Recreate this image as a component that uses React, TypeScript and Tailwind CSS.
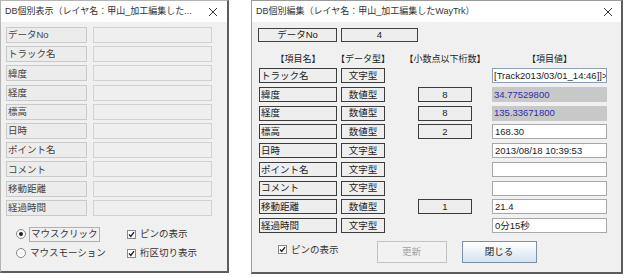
import React from 'react';

const leftRows = ['データNo', 'トラック名', '緯度', '経度', '標高', '日時', 'ポイント名', 'コメント', '移動距離', '経過時間'];

type EditRow = { name: string; type: string; digits?: string; value: string; kind: 'white' | 'gray' | 'focus' };

const editRows: EditRow[] = [
  { name: 'トラック名', type: '文字型', value: '[Track2013/03/01_14:46]]>', kind: 'focus' },
  { name: '緯度', type: '数値型', digits: '8', value: '34.77529800', kind: 'gray' },
  { name: '経度', type: '数値型', digits: '8', value: '135.33671800', kind: 'gray' },
  { name: '標高', type: '数値型', digits: '2', value: '168.30', kind: 'white' },
  { name: '日時', type: '文字型', value: '2013/08/18 10:39:53', kind: 'white' },
  { name: 'ポイント名', type: '文字型', value: '', kind: 'white' },
  { name: 'コメント', type: '文字型', value: '', kind: 'white' },
  { name: '移動距離', type: '数値型', digits: '1', value: '21.4', kind: 'white' },
  { name: '経過時間', type: '文字型', value: '0分15秒', kind: 'white' },
];

const CloseX = () => (
  <svg width="10" height="10" viewBox="0 0 10 10" className="text-[#333]">
    <path d="M1 1L9 9M9 1L1 9" stroke="currentColor" strokeWidth="1" />
  </svg>
);

const Check = () => (
  <span className="w-[9px] h-[9px] border border-[#8a8a8a] bg-white flex items-center justify-center">
    <svg width="7" height="7" viewBox="0 0 7 7">
      <path d="M1 3.5L2.8 5.5L6 1.2" stroke="#222" strokeWidth="1.4" fill="none" />
    </svg>
  </span>
);

const Radio = ({ on }: { on?: boolean }) => (
  <span className="w-[10px] h-[10px] rounded-full border border-[#8a8a8a] bg-gradient-to-b from-[#f4f4f4] to-white flex items-center justify-center">
    {on && <span className="w-[4px] h-[4px] rounded-full bg-[#222]" />}
  </span>
);

export default function App() {
  return (
    <div className="w-[624px] h-[278px] bg-white flex font-['Liberation_Sans','Noto_Sans_CJK_JP',sans-serif] text-[9.5px] leading-none text-[#222]">
      {/* 表示ウィンドウ */}
      <div className="w-[229px] h-[273px] bg-[#f0f0f0] border-l border-t border-[#b4b4b4] border-r-2 border-b-2 border-r-[#5c5c5c] border-b-[#5c5c5c] flex flex-col">
        <div className="h-[21px] bg-white flex items-center justify-between pl-[4px] pr-[9px] text-[9px] text-[#333]">
          <span>DB個別表示（レイヤ名：甲山_加工編集した...</span>
          <CloseX />
        </div>
        <div className="flex flex-col gap-[3.2px] pt-[5px] pl-[5px]">
          {leftRows.map(r => (
            <div key={r} className="flex gap-[6px]">
              <div className="w-[81px] h-[16px] border border-[#c9c9c9] bg-[#ececec] flex items-center pl-[1px] text-[#444]">{r}</div>
              <div className="w-[119px] h-[16px] border border-[#d2d2d2] bg-[#efefef]" />
            </div>
          ))}
        </div>
        <div className="flex flex-col gap-[4px] pt-[11px] pl-[15px] text-[#333]">
          <div className="flex items-center h-[15px]">
            <div className="w-[111px] flex items-center gap-[3px]">
              <Radio on />
              <span className="h-[15px] border border-[#9fb4cc] flex items-center px-[1px]">マウスクリック</span>
            </div>
            <div className="flex items-center gap-[4px]">
              <Check />
              <span>ピンの表示</span>
            </div>
          </div>
          <div className="flex items-center h-[15px]">
            <div className="w-[111px] flex items-center gap-[4px]">
              <Radio />
              <span>マウスモーション</span>
            </div>
            <div className="flex items-center gap-[4px]">
              <Check />
              <span>桁区切り表示</span>
            </div>
          </div>
        </div>
      </div>

      {/* 編集ウィンドウ */}
      <div className="ml-[22px] w-[372px] h-[274px] bg-[#f0f0f0] border-l border-t border-[#9a9a9a] border-r-2 border-b-2 border-r-[#5c5c5c] border-b-[#5c5c5c] flex flex-col">
        <div className="h-[21px] bg-white flex items-center justify-between pl-[4px] pr-[8px] text-[9px] text-[#333]">
          <span>DB個別編集（レイヤ名：甲山_加工編集したWayTrk）</span>
          <CloseX />
        </div>
        <div className="flex gap-[4px] pt-[6px] pl-[6px]">
          <div className="w-[79px] h-[14px] border border-[#404040] bg-[#eeeeee] flex items-center justify-center">データNo</div>
          <div className="w-[77px] h-[14px] border border-[#404040] bg-[#eeeeee] flex items-center justify-center">4</div>
        </div>
        <div className="flex items-center h-[12px] mt-[11px] pl-[7px] text-[9px] whitespace-nowrap">
          <div className="w-[78px] flex justify-center">【項目名】</div>
          <div className="w-[44px] ml-[4px] flex justify-center">【データ型】</div>
          <div className="w-[54px] ml-[33px] flex justify-center">【小数点以下桁数】</div>
          <div className="w-[115px] ml-[20px] flex justify-center">【項目値】</div>
        </div>
        <div className="flex flex-col gap-[3.75px] mt-[3px] pl-[7px]">
          {editRows.map(r => (
            <div key={r.name} className="flex h-[15px]">
              <div className="w-[78px] border border-[#3c3c3c] bg-[#eeeeee] flex items-center pl-[1px]">{r.name}</div>
              <div className="w-[44px] ml-[4px] border border-[#3c3c3c] bg-[#eeeeee] flex items-center justify-center">{r.type}</div>
              {r.digits ? (
                <div className="w-[54px] ml-[33px] border border-[#3c3c3c] bg-[#eeeeee] flex items-center justify-center">{r.digits}</div>
              ) : (
                <div className="w-[54px] ml-[33px]" />
              )}
              <div
                className={
                  r.kind === 'gray'
                    ? 'w-[115px] ml-[20px] bg-[#c8c8c8] text-[#2c2cb0] flex items-center pl-[2px]'
                    : r.kind === 'focus'
                    ? 'w-[115px] ml-[20px] bg-white border border-[#8aa0bf] flex items-center pl-[1px] whitespace-nowrap overflow-hidden'
                    : 'w-[115px] ml-[20px] bg-white border border-[#a8a8a8] flex items-center pl-[2px]'
                }
              >
                {r.value}
              </div>
            </div>
          ))}
        </div>
        <div className="flex items-start mt-[8px] pl-[26px]">
          <div className="flex items-center gap-[4px] mt-[4px] text-[#333]">
            <Check />
            <span>ピンの表示</span>
          </div>
          <div className="w-[70px] h-[22px] ml-[38px] border border-[#c4c4c4] bg-[#f2f2f2] text-[#a0a0a0] flex items-center justify-center">更新</div>
          <div className="w-[75px] h-[22px] ml-[15px] border border-[#7d90a8] bg-gradient-to-b from-white to-[#d6e2f0] flex items-center justify-center">閉じる</div>
        </div>
      </div>
    </div>
  );
}
